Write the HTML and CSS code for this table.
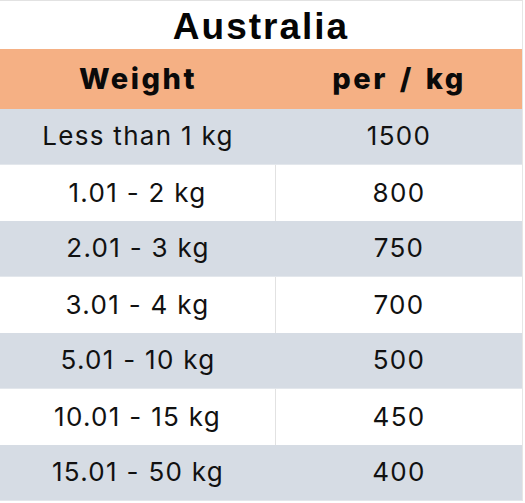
FILE: index.html
```html
<!DOCTYPE html>
<html>
<head>
<meta charset="utf-8">
<link rel="stylesheet" href="styles.css">
</head>
<body>
<div class="sheet">
  <div class="title">Australia</div>
  <div class="row head">
    <div class="cell">Weight</div>
    <div class="cell">per / kg</div>
  </div>
  <div class="row gray"><div class="cell">Less than 1 kg</div><div class="cell">1500</div></div>
  <div class="row white"><div class="cell">1.01 - 2 kg</div><div class="cell">800</div></div>
  <div class="row gray"><div class="cell">2.01 - 3 kg</div><div class="cell">750</div></div>
  <div class="row white"><div class="cell">3.01 - 4 kg</div><div class="cell">700</div></div>
  <div class="row gray"><div class="cell">5.01 - 10 kg</div><div class="cell">500</div></div>
  <div class="row white"><div class="cell">10.01 - 15 kg</div><div class="cell">450</div></div>
  <div class="row gray"><div class="cell">15.01 - 50 kg</div><div class="cell">400</div></div>
</div>
</body>
</html>
```
FILE: styles.css
```css
html, body {
  margin: 0;
  padding: 0;
  background: #ffffff;
}
.sheet {
  width: 522px;
  border-top: 1px solid #e2e2e2;
  border-right: 1px solid #e6e6e6;
  font-family: "Inter", "Open Sans", sans-serif;
  color: #111111;
}
.title {
  height: 48px;
  box-sizing: border-box;
  padding-top: 4px;
  display: flex;
  align-items: center;
  justify-content: center;
  font-family: "Liberation Sans", Arial, sans-serif;
  font-weight: 700;
  font-size: 37px;
  letter-spacing: 2px;
  color: #050505;
}
.row {
  display: grid;
  grid-template-columns: 276px 1fr;
  height: 56px;
  box-sizing: border-box;
}
.cell {
  display: flex;
  align-items: center;
  justify-content: center;
  font-size: 26px;
  font-weight: 400;
  letter-spacing: 1.3px;
  padding-bottom: 2px;
}
.head {
  height: 60px;
  background: #f5b084;
}
.head .cell {
  font-size: 29px;
  font-weight: 800;
  letter-spacing: 2.5px;
  word-spacing: 3px;
  color: #0a0a0a;
}
.gray {
  background: #d6dce4;
  border-bottom: 1px solid #e3e7ec;
}
.white {
  background: #ffffff;
}
.white .cell:first-child {
  border-right: 1px solid #e2e2e2;
}
```
